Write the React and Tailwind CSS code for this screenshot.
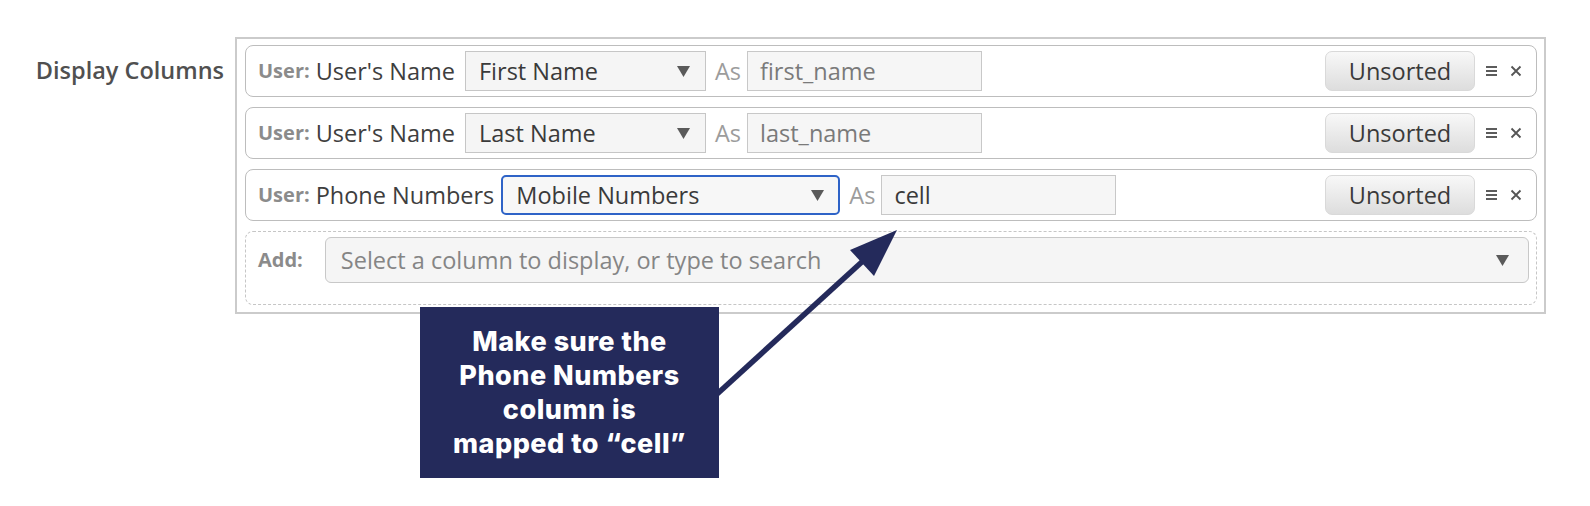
import React from "react";

function Caret({ className = "" }) {
  return (
    <svg width="13" height="11" viewBox="0 0 13 11" className={className}>
      <polygon points="0,0 13,0 6.5,11" fill="#5a5a5a" />
    </svg>
  );
}

function Handle() {
  return (
    <svg width="12" height="12" viewBox="0 0 12 12" className="ml-[11px]">
      <rect x="0" y="1" width="11" height="2" fill="#5c5c5c" />
      <rect x="0" y="5" width="11" height="2" fill="#5c5c5c" />
      <rect x="0" y="9" width="11" height="2" fill="#5c5c5c" />
    </svg>
  );
}

function Close() {
  return (
    <svg width="12" height="12" viewBox="0 0 12 12" className="ml-[12px]">
      <path d="M1.5 1.5 L10.5 10.5 M10.5 1.5 L1.5 10.5" stroke="#555" strokeWidth="1.8" />
    </svg>
  );
}

function Row({ field, option, alias, selW, focused, aliasDark }) {
  return (
    <div className="h-[52px] border border-[#bdbdbd] rounded-[8px] flex items-center pl-[12px] pr-[14px] bg-white">
      <span className="text-[20px] font-bold text-[#8b8b8b]">User:</span>
      <span className="ml-[6px] text-[#3e3e3e]">{field}</span>
      <div
        className={
          focused
            ? "ml-[7px] h-[40px] border-2 border-[#2e63c7] rounded-[5px] bg-[#f7f7f7] flex items-center justify-between pl-[13px] pr-[14px]"
            : "ml-[10px] h-[40px] border border-[#c6c6c6] bg-[#f5f5f5] flex items-center justify-between pl-[13px] pr-[15px]"
        }
        style={{ width: selW }}
      >
        <span className="text-[#3a3a3a]">{option}</span>
        <Caret />
      </div>
      <span className="ml-[9px] text-[#9c9c9c]">As</span>
      <div className="ml-[6px] w-[235px] h-[40px] border border-[#c8c8c8] bg-[#f6f6f6] flex items-center pl-[12px]">
        <span className={aliasDark ? "text-[#3a3a3a]" : "text-[#7a7a7a]"}>{alias}</span>
      </div>
      <div className="flex-1" />
      <button className="w-[150px] h-[40px] rounded-[7px] border border-[#d9d9d9] bg-linear-to-b from-[#f8f8f8] to-[#dddddd] text-[#3a3a3a] flex items-center justify-center">
        Unsorted
      </button>
      <Handle />
      <Close />
    </div>
  );
}

export default function App() {
  return (
    <div className="relative w-[1590px] h-[506px] bg-white overflow-hidden font-['Open_Sans',sans-serif] text-[23.5px] leading-[30px]">
      <div className="flex pt-[37px]">
        <div className="w-[235px] pr-[11px] pt-[18px] text-right font-semibold text-[23.5px] text-[#505050]">
          Display Columns
        </div>
        <div className="w-[1311px] border-2 border-[#cbcbcb] pl-[8px] pr-[7px] pt-[6px] pb-[7px] flex flex-col gap-[10px]">
          <Row field="User's Name" option="First Name" alias="first_name" selW="241px" />
          <Row field="User's Name" option="Last Name" alias="last_name" selW="241px" />
          <Row field="Phone Numbers" option="Mobile Numbers" alias="cell" selW="339px" focused aliasDark />
          <div className="h-[74px] border border-dashed border-[#c6c6c6] rounded-[8px] flex items-start pt-[5px] pl-[12px] pr-[7px]">
            <span className="mt-[8px] text-[20px] font-bold text-[#8b8b8b]">Add:</span>
            <div className="ml-[22px] flex-1 h-[46px] rounded-[6px] border border-[#c8c8c8] bg-[#f5f5f5] flex items-center justify-between pl-[15px] pr-[19px]">
              <span className="text-[23.5px] text-[#858585]">Select a column to display, or type to search</span>
              <Caret />
            </div>
          </div>
        </div>
      </div>

      <svg className="absolute left-0 top-0 pointer-events-none" width="1590" height="506">
        <line x1="716" y1="395" x2="864" y2="260" stroke="#242a5b" strokeWidth="5.5" />
        <polygon points="897,230 850,250 874,276" fill="#242a5b" />
      </svg>

      <div className="absolute left-[420px] top-[307px] w-[299px] h-[171px] bg-[#242a5b] flex flex-col items-center justify-center text-white font-['Inter',sans-serif] font-extrabold text-[27px] tracking-[0.5px] leading-[34px] text-center">
        <div>Make sure the</div>
        <div>Phone Numbers</div>
        <div>column is</div>
        <div>mapped to “cell”</div>
      </div>
    </div>
  );
}
